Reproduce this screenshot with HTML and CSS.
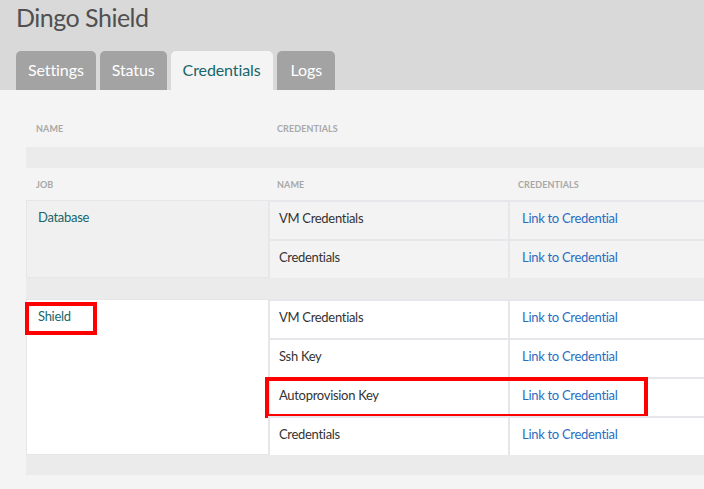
FILE: index.html
```html
<!DOCTYPE html>
<html>
<head>
<meta charset="utf-8">
<link rel="stylesheet" href="styles.css">
</head>
<body>
<div class="header">
  <h1 class="title">Dingo Shield</h1>
  <div class="tabs">
    <div class="tab">Settings</div>
    <div class="tab">Status</div>
    <div class="tab active">Credentials</div>
    <div class="tab logs">Logs</div>
  </div>
</div>
<div class="content">
  <div class="outer-head">
    <div class="oh-name">Name</div>
    <div class="oh-cred">Credentials</div>
  </div>
  <div class="band">
    <div class="inner-head">
      <div class="c-job">Job</div>
      <div class="c-name">Name</div>
      <div class="c-cred">Credentials</div>
    </div>
    <div class="group db">
      <div class="job-cell">Database</div>
      <div class="rows">
        <div class="row"><div class="name">VM Credentials</div><div class="cred"><a href="#">Link to Credential</a></div></div>
        <div class="row"><div class="name">Credentials</div><div class="cred"><a href="#">Link to Credential</a></div></div>
      </div>
    </div>
    <div class="group shield">
      <div class="job-cell">Shield<span class="mark mark-job"></span></div>
      <div class="rows">
        <div class="row"><div class="name">VM Credentials</div><div class="cred"><a href="#">Link to Credential</a></div></div>
        <div class="row"><div class="name">Ssh Key</div><div class="cred"><a href="#">Link to Credential</a></div></div>
        <div class="row"><div class="name">Autoprovision Key</div><div class="cred"><a href="#">Link to Credential</a></div><span class="mark mark-row"></span></div>
        <div class="row"><div class="name">Credentials</div><div class="cred"><a href="#">Link to Credential</a></div></div>
      </div>
    </div>
  </div>
</div>
</body>
</html>
```
FILE: styles.css
```css
* { box-sizing: border-box; }
html, body { margin: 0; padding: 0; }
body {
  font-family: Lato, "Open Sans", sans-serif;
  background: #f4f4f4;
  width: 704px;
  height: 489px;
  overflow: hidden;
}
.header {
  background: #d9d9d9;
  padding: 2px 0 0 16px;
}
.title {
  margin: 0;
  font-weight: 400;
  font-size: 25px;
  line-height: 30px;
  letter-spacing: -0.5px;
  color: #505050;
}
.tabs {
  display: flex;
  gap: 4px;
  margin-top: 19px;
}
.tab {
  height: 39px;
  padding: 0 12px 3px;
  display: flex;
  align-items: center;
  background: #a3a3a3;
  color: #fff;
  font-size: 16px;
  letter-spacing: -0.1px;
  border-radius: 5px 5px 0 0;
}
.tab.logs { padding: 0 13px 3px 14px; }
.tab.active {
  background: #f4f4f4;
  color: #17666a;
}
.content {
  padding: 0 0 0 26px;
}
.outer-head, .inner-head {
  display: flex;
  font-size: 9px;
  font-weight: 700;
  text-transform: uppercase;
  color: #a8a8a8;
  letter-spacing: 0.1px;
}
.outer-head {
  height: 57px;
  align-items: flex-end;
  padding-bottom: 13px;
}
.oh-name { width: 251px; padding-left: 10px; }
.band {
  background: #ebebeb;
  padding: 21px 0 20px;
}
.inner-head {
  height: 32px;
  align-items: center;
  background: #f4f4f4;
}
.c-job { width: 242px; padding-left: 10px; }
.c-name { width: 240px; padding-left: 9px; }
.c-cred { padding-left: 10px; }
.group {
  display: flex;
  font-size: 13px;
  line-height: 17px;
  letter-spacing: -0.3px;
}
.group.db { margin-bottom: 21px; }
.group.db .job-cell { background: #f0f0f0; }
.group.db .row { background: #f3f3f3; }
.group.shield .job-cell, .group.shield .row { background: #fff; }
.job-cell {
  position: relative;
  width: 242px;
  padding: 8px 10px 0 11px;
  color: #17666a;
  border-left: 1px solid #e6e6e8;
  border-top: 1px solid #e6e6e8;
  border-bottom: 1px solid #e6e6e8;
}
.rows { flex: 1; }
.row {
  position: relative;
  display: flex;
  height: 39px;
  border-top: 2px solid #e6e6eb;
}
.row .name {
  width: 240px;
  padding: 8px 0 0 9px;
  border-left: 2px solid #e6e6eb;
  color: #333;
}
.row .cred {
  flex: 1;
  padding: 8px 0 0 12px;
  border-left: 2px solid #e6e6eb;
}
.cred a {
  color: #2b6dbf;
  text-decoration: none;
}
.mark {
  position: absolute;
  border: 4px solid #ff0000;
}
.mark-job {
  left: -2px;
  top: 2px;
  width: 72px;
  height: 33px;
}
.mark-row {
  left: -3px;
  top: -2px;
  width: 383px;
  height: 41px;
}
```
